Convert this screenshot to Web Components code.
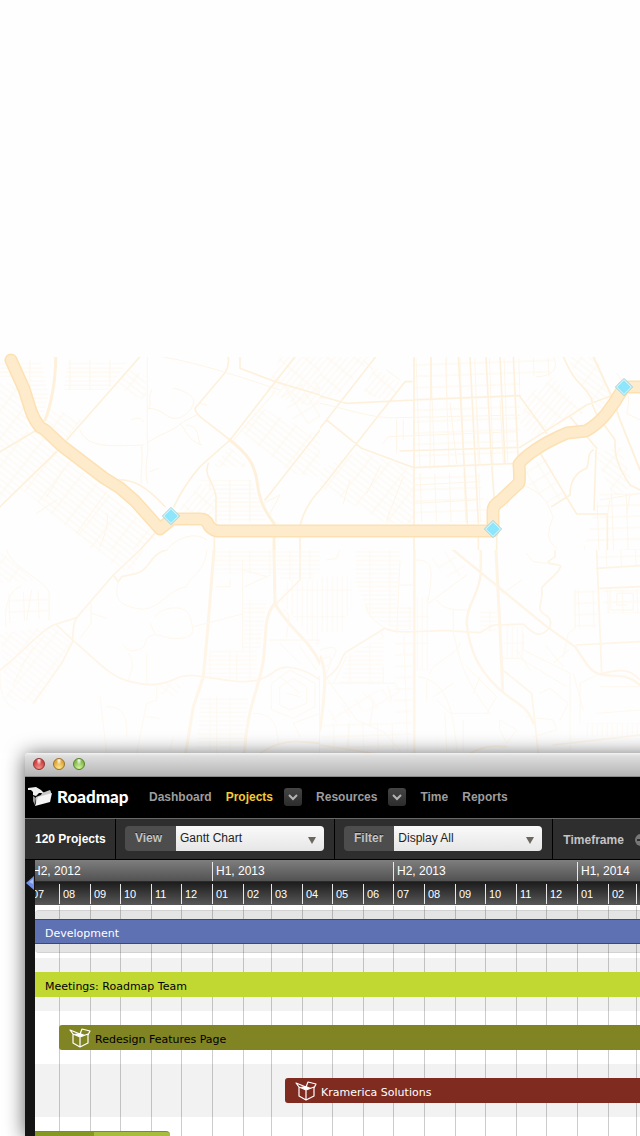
<!DOCTYPE html>
<html lang="en">
<head>
<meta charset="utf-8">
<meta name="viewport" content="width=device-width, initial-scale=1">
<title>Roadmap</title>
<style>
  body { margin: 0; background: #fff; font-family: "Liberation Sans", Arial, sans-serif; font-size: 12px; }
</style>
</head>
<body>
<landing-stage>
  <street-map slot="map"></street-map>
  <app-window>
    <app-nav slot="bar"></app-nav>
    <app-toolbar slot="bar"></app-toolbar>
    <gantt-chart></gantt-chart>
  </app-window>
</landing-stage>

<template id="t-stage">
  <style>
    :host { display: flex; flex-direction: column; height: 100vh; overflow: hidden; }
    .map { flex: 1 1 0; min-height: 0; }
    .win { flex: 0 0 383px; min-height: 0; display: flex; padding-left: 25px; margin-right: -40px; }
  </style>
  <div class="map"><slot name="map"></slot></div>
  <div class="win"><slot></slot></div>
</template>

<template id="t-map">
  <style>
    :host { display: block; height: 100%; background: #fefefe; }
    svg { display: block; width: 100%; height: 100%; }
    .st { fill: none; stroke: #fef1dc; stroke-linecap: round; stroke-linejoin: round; }
    .a { stroke-width: 9; } .b { stroke-width: 5; } .c { stroke-width: 3; stroke: #fef5e6; }
    .low { opacity: .75; }
  </style>
  <svg viewBox="0 0 640 753" preserveAspectRatio="xMinYMax slice" role="img" aria-label="Street map with a highlighted route">
    <defs>
      <pattern id="h" width="60" height="13" patternUnits="userSpaceOnUse"><path d="M0 6H60M30 0V13" fill="none" stroke="#fef5e7" stroke-width="2"/></pattern>
      <pattern id="v" width="15" height="80" patternUnits="userSpaceOnUse"><path d="M7 0V80M0 40H15" fill="none" stroke="#fef7ec" stroke-width="2.5"/></pattern>
      <pattern id="d" width="15" height="52" patternUnits="userSpaceOnUse" patternTransform="rotate(40)"><path d="M7 0V52M0 26H15" fill="none" stroke="#fef5e8" stroke-width="2"/></pattern>
      <pattern id="e" width="52" height="16" patternUnits="userSpaceOnUse" patternTransform="rotate(38)"><path d="M0 8H52M26 0V16" fill="none" stroke="#fef5e8" stroke-width="2"/></pattern>
      <pattern id="g" width="44" height="34" patternUnits="userSpaceOnUse" patternTransform="rotate(-2)"><path d="M0 17H44M22 0V34" fill="none" stroke="#fef5e7" stroke-width="2.5"/></pattern>
      <pattern id="k" width="42" height="36" patternUnits="userSpaceOnUse" patternTransform="rotate(-32)"><path d="M0 18H42M21 0V36" fill="none" stroke="#fef7ec" stroke-width="2.5"/></pattern>
      <clipPath id="top"><rect y="357" width="640" height="396"/></clipPath>
      <clipPath id="q"><rect width="960" height="630"/></clipPath>
      <linearGradient id="fade" x2="0" y2="1"><stop offset=".5" stop-color="#fff" stop-opacity="0"/><stop offset="1" stop-color="#fff" stop-opacity=".25"/></linearGradient>
    </defs>
    <g clip-path="url(#top)">
      <!-- north-west quarter -->
      <g transform="translate(0 340) scale(.33333)"><g class="st" clip-path="url(#q)">
        <g stroke="none">
          <path fill="url(#h)" d="M0 60H120L145 160 130 230 90 230 40 110 0 110ZM205 60H385L325 150H190ZM600 420H755L800 545H640L650 470Z"/>
          <path fill="url(#e)" d="M0 130H60L100 250 0 310ZM145 200L245 240 195 300 130 250ZM385 85L440 110 435 180 345 140ZM0 300L100 270 480 590 400 630H280L70 450 0 480Z"/>
          <path fill="url(#e)" d="M780 200L960 290V410L870 400 720 270ZM640 380L690 320 750 380Z"/>
          <path fill="url(#d)" d="M840 50H960V200L880 190 800 150ZM600 430L530 510 640 530 650 460Z"/>
          <path fill="url(#k)" d="M830 150L960 120V260L880 240Z"/>
        </g>
        <path class="a" d="M167 50C168 120 152 200 135 240M690 300C740 340 765 370 772 430S800 520 822 550L822 630"/>
        <path class="b" d="M720 50V85L835 128 960 165M885 50L690 300 600 380C570 415 545 450 522 500M420 50L200 300M170 335L0 500M684 50C690 75 680 90 675 98L585 205C585 215 590 220 600 230L690 300M345 420C400 415 440 440 495 500M960 270L795 480M0 335L110 270M643 590V630M900 590V630"/>
        <path class="b" d="M625 370C610 410 640 420 648 470V545M960 450C930 480 910 520 900 555M420 630L500 540"/>
        <path class="c" d="M485 50C600 70 720 110 840 150M442 50V300C450 340 430 370 442 430M240 270C260 320 310 320 430 315M440 310C480 280 510 280 550 245L590 225M445 205C490 205 500 240 530 235S580 200 580 190C590 170 550 150 520 145M540 250C560 270 560 300 605 315M560 255C600 260 590 290 600 310M455 150C440 180 460 190 445 205M425 320C430 380 420 400 424 430M395 240C410 230 425 235 430 245M450 395L475 385M500 630C540 580 600 580 620 600M170 480L110 520M320 455L230 580M320 520C330 540 310 600 300 620M190 390L140 470M790 490L840 465 810 520M825 155L700 300M600 190L620 195"/>
      </g></g>
      <!-- north-east quarter -->
      <g transform="translate(320 340) scale(.33333)"><g class="st" clip-path="url(#q)">
        <g stroke="none">
          <path fill="url(#d)" d="M0 50H160L60 160 0 180ZM160 80L240 130 220 190 130 160ZM620 170L700 110 790 220 640 290 600 250Z"/>
          <path fill="url(#g)" d="M282 55H700L690 110 600 105V370L282 385ZM282 400H480L500 545H282ZM840 460H960V630H790Z"/>
          <path fill="url(#e)" d="M740 50H830L880 200 860 250 800 170ZM0 390L120 330 282 390V550H200L0 440ZM820 340L900 320 940 440 880 470Z"/>
          <path fill="url(#k)" d="M600 390L680 350 740 470 690 495 620 430Z"/>
        </g>
        <path class="a" style="stroke-width:6px" d="M820 50L880 180 900 240 960 390"/>
        <path class="b" d="M0 168L80 190 280 180 600 167M167 50L0 265M275 125H255L0 450M282 50V630M20 240L125 325 282 383 600 370M240 333L600 322 800 195 880 165M415 50L442 550M450 50L475 550M498 50L513 340 522 470M540 50L555 370M580 50L595 370M333 50V180M730 50C770 140 780 120 815 175 815 220 860 260 885 300 885 330 880 360 930 435L960 450M655 330L770 522H862V630M695 500L750 465C750 430 760 400 800 385 810 360 800 340 820 330M828 330L822 510M530 590V630M475 590V630M750 230L830 325M600 170L680 280"/>
        <path class="c" d="M0 190C60 200 160 240 240 233L600 225M190 310L205 290 590 275M230 240V340M250 240V300M330 180V385M380 50V180M282 435L480 425M282 490L470 480M130 60L160 90M200 90L240 120M390 190L410 370M540 180L550 370M470 200L480 370M180 380L140 460M90 420L70 490M250 410L200 540M620 440C690 470 690 520 700 530 680 580 680 600 710 625M890 100C930 150 930 180 920 220L960 240M870 480L860 540M930 465L920 520M960 460L840 480M580 450L560 500M700 50C720 90 690 110 650 110"/>
      </g></g>
      <!-- south-west quarter -->
      <g transform="translate(0 550) scale(.33333)"><g class="st low" clip-path="url(#q)">
        <g stroke="none">
          <path fill="url(#e)" d="M290 0H430L400 60 350 60ZM0 0L100 90 0 100ZM0 250L160 230 215 280 120 460 20 450ZM470 400H555L520 445 480 430Z"/>
          <path fill="url(#g)" d="M25 130L140 120 150 200 20 220Z"/>
          <path fill="url(#h)" d="M640 0H960V70H640ZM728 150H800L780 300 728 300ZM630 300H770L770 390 610 380ZM600 440H745L730 600H590ZM840 0H940V90H840Z"/>
          <path fill="url(#v)" d="M865 90H960V300L840 150Z"/>
        </g>
        <path class="a" d="M642 0L622 250 610 380 580 470 557 610M822 0L825 160C790 200 800 250 790 330S740 470 733 610M825 160C860 230 930 270 960 340"/>
        <path class="b" d="M420 0L340 75 230 203 160 225C110 250 90 290 0 360M500 0C450 10 450 60 410 70L365 80 355 95 340 75M170 225L220 272C300 340 330 380 390 395S490 405 530 385 620 385 700 393 800 380 830 360 920 360 960 390M230 203C215 230 220 260 218 275L185 340 100 460M960 380V610M780 610C840 570 880 570 960 580M900 0V90L825 165"/>
        <path class="c" d="M620 0C620 60 560 90 560 110 500 120 490 170 430 178 360 170 340 150 355 95M465 200C480 170 560 160 570 200 580 240 590 260 540 265 500 270 480 250 460 255 430 260 440 290 425 295 390 310 380 300 370 285M450 220L465 250M580 230L728 192M728 30V300M730 60L800 80M735 110L810 75M440 310V400M385 310C410 340 390 370 385 390M273 160V220L240 265M275 190L320 205M20 0C40 60 140 90 147 130V210M95 120L80 210M60 110C30 120 10 170 18 230M0 370C0 430 10 460 50 480M100 290L40 400M130 260L60 350M470 410V450L440 460 410 610M300 440L320 610M320 470C380 470 380 510 380 560M650 110H690V90M710 310V390M650 440V610M440 500L480 505M520 560L510 600M815 400L870 360 945 400V470L880 505 815 480ZM840 410L880 385 920 410V460L870 480 840 465ZM860 430L900 440M840 380L900 430M900 290L950 360M810 270H960M840 280L900 340M850 180C880 190 860 230 860 260M760 490C830 490 830 540 835 580M880 520L960 490M900 560L880 520"/>
      </g></g>
      <!-- south-east quarter -->
      <g transform="translate(320 550) scale(.33333)"><g class="st low" clip-path="url(#q)">
        <g stroke="none">
          <path fill="url(#v)" d="M0 80H95V190L75 200V245H0ZM550 230H610V325H550ZM286 140H325V360H286ZM790 520H960V560H790Z"/>
          <path fill="url(#h)" d="M107 0H240L225 235 150 200 107 100ZM225 170H282V240H225ZM90 310L190 260V400H60ZM480 180H530V245H480Z"/>
          <path fill="url(#k)" d="M20 480L235 400 240 450 40 520ZM330 30L380 0 440 50 400 100Z"/>
          <path fill="url(#g)" d="M225 260H282V600H225ZM830 0H960V50H830ZM765 120H830V235H765ZM850 120H960V190H850ZM10 520H280V600H0Z"/>
        </g>
        <path class="a" d="M0 320C20 360 15 400 10 460L0 540M528 0L540 240 548 420"/>
        <path class="a" style="stroke-width:7px" d="M283 0V610M240 -130L400 0 680 230 765 290C800 340 810 370 850 375S920 370 960 405M482 0V70C480 130 440 160 440 220 450 310 480 360 530 410S620 460 640 520"/>
        <path class="b" d="M18 385C70 350 60 320 80 305L195 235C230 255 320 240 380 242L480 248C500 240 510 220 540 225L610 222C640 250 660 270 690 230 700 190 660 200 660 175 660 150 670 140 665 115 680 90 710 80 722 50 720 40 680 45 685 35L705 20V0M830 0L845 370M830 55L960 47M840 115L960 110M770 285L960 275M850 370C920 350 940 370 960 390M548 360L635 430 655 610M0 585L160 610M450 610C490 590 510 585 560 590M700 585L960 555"/>
        <path class="c" d="M138 165C140 200 170 215 195 235M325 160L440 75M350 150C370 180 400 180 450 180M282 30C340 30 340 50 325 150M330 370C330 340 420 310 420 280M400 180V250C420 320 420 370 510 490M295 380C370 390 400 460 410 600M320 390V450M350 450L390 490 510 490M545 325L600 325 740 410M610 250V300L750 370V600M500 80L550 130 605 90M620 10L640 35 680 40M765 120V235L745 250 730 320M780 520V400L830 375M430 510V600M375 490L380 600M500 490L530 440 440 350M20 385L110 510 190 545 240 600M190 350V400M80 320L40 400M20 400H225M180 240L190 260M0 300C60 280 60 300 20 350M0 330C40 310 40 320 20 370M130 430L150 450M205 410L215 450M90 520L80 600M160 450L150 530M870 120V180H940V130H890V165H920M660 430L690 415 745 460 720 510M540 510L590 540 560 580 540 540ZM620 500L700 510 710 540 640 560M460 430L480 380M340 440L400 400M760 370L790 480M840 410H960M830 490L960 480M680 290L730 350M700 340L745 300M240 30L230 250M282 105H240M20 30L50 25 60 0M590 300L630 360"/>
      </g></g>
      <rect y="357" width="640" height="396" fill="url(#fade)"/>
    </g>
    <g fill="none" stroke-linejoin="round" stroke-linecap="round">
      <path stroke="#fde1b2" stroke-width="13" d="M11 360L24 389 31 411Q34 420 40 427L45 430 62 446 104 478 120 488 135 501 160 529 172 519H200Q206 519 208 524T217 531H493V511Q493 505 500 501L519 483Q520 480 519 464 522 459 535 450T567 433L586 431Q598 424 606 414L614 403 624 387H650"/>
      <path stroke="#fdebcc" stroke-width="10" d="M11 360L24 389 31 411Q34 420 40 427L45 430 62 446 104 478 120 488 135 501 160 529 172 519H200Q206 519 208 524T217 531H493V511Q493 505 500 501L519 483Q520 480 519 464 522 459 535 450T567 433L586 431Q598 424 606 414L614 403 624 387H650"/>
    </g>
    <g fill="#fff" stroke="#86cbd6" stroke-width="1">
      <path d="M171 507.500L179.500 516 171 524.500 162.500 516ZM493 520.500L501.500 529 493 537.500 484.500 529ZM624 378.500L632.500 387 624 395.500 615.500 387Z"/>
      <path stroke="none" fill="#8ee6fd" d="M171 509L178 516 171 523 164 516ZM493 522L500 529 493 536 486 529ZM624 380L631 387 624 394 617 387Z"/>
    </g>
  </svg>
</template>

<template id="t-window">
  <style>
    :host { display: flex; flex-direction: column; flex: 1; min-width: 0; position: relative; background: #fff; border-radius: 4px 4px 0 0; box-shadow: 0 2px 20px rgba(0,0,0,.65); }
    .title { box-sizing: border-box; flex: none; height: 24px; padding: 0 8px 2px; display: flex; align-items: center; gap: 8px; border-radius: 4px 4px 0 0; background: linear-gradient(#f2f2f2, #dedede 3px, #b4b4b4); border-bottom: 1px solid #8a8a8a; }
    button { width: 12px; height: 12px; padding: 0; border: 1px solid var(--rim); border-radius: 50%; background: radial-gradient(ellipse at 50% 15%, #fff 0, transparent 38%), radial-gradient(circle at 50% 90%, var(--glow) 0, var(--tone) 65%); }
    .r { --rim: #8e3230; --tone: #cf4343; --glow: #f2908c; }
    .y { --rim: #97702a; --tone: #e0a63a; --glow: #fde88c; }
    .g { --rim: #55802c; --tone: #84ba4e; --glow: #d2f59c; }
    .body { flex: 1; min-height: 0; display: flex; }
  </style>
  <div class="title"><button class="r" aria-label="Close"></button><button class="y" aria-label="Minimise"></button><button class="g" aria-label="Zoom"></button></div>
  <slot name="bar"></slot>
  <div class="body"><slot></slot></div>
</template>

<template id="t-nav">
  <style>
    :host { display: block; background: #000; border-bottom: 1px solid #6a6a6a; }
    nav { box-sizing: border-box; display: flex; align-items: center; gap: 14px; height: 41px; padding: 0 0 2px 3px; font-weight: bold; line-height: 16px; }
    a { color: #9d9d9d; text-decoration: none; }
    .logo { display: flex; align-items: center; gap: 4px; width: 107px; color: #fff; font: 900 17px/24px Lato, sans-serif; }
    .on { color: #f3cb38; }
    .pair { display: flex; align-items: center; gap: 11px; }
    button { width: 18px; height: 18px; padding: 0; border: 0; border-radius: 3px; background: linear-gradient(#454545, #2c2c2c); display: grid; place-items: center; }
  </style>
  <nav>
    <a class="logo" href="#"><svg width="25" height="20" viewBox="0 0 25 20" aria-hidden="true"><path fill="#eee" d="M0 1L8 0 13 3 16 6 11 6 8 9 5 8 5 5 3 3 0 3Z"/><path fill="#999" d="M5 9L8 11 7 18 5 14Z"/><path fill="#c8c8c8" d="M8 10L13 8 14 6 22 3 23 5 23 8 8 16Z"/><path fill="#f4f4f4" d="M10 10L24 6 22 15 7 19Z"/></svg><span>Roadmap</span></a>
    <a href="#">Dashboard</a>
    <span class="pair"><a class="on" href="#">Projects</a><button aria-label="Projects menu"><svg width="10" height="8" viewBox="0 0 10 8"><path d="M1 2L5 6 9 2" fill="none" stroke="#b4b4b4" stroke-width="2"/></svg></button></span>
    <span class="pair"><a href="#">Resources</a><button aria-label="Resources menu"><svg width="10" height="8" viewBox="0 0 10 8"><path d="M1 2L5 6 9 2" fill="none" stroke="#b4b4b4" stroke-width="2"/></svg></button></span>
    <a href="#">Time</a>
    <a href="#">Reports</a>
  </nav>
</template>

<template id="t-toolbar">
  <style>
    :host { display: flex; height: 40px; background: #2e2e2e; border-bottom: 1px solid #000; font-weight: bold; line-height: 16px; color: #c4c4c4; white-space: nowrap; }
    .cell { display: flex; align-items: center; padding: 0 10px 0 9px; border-right: 1px solid #000; }
    .count { color: #fff; padding: 0 9px 0 10px; width: 71px; }
    .pick { padding-bottom: 2px; }
    .last { border: 0; gap: 11px; padding-top: 2px; padding-left: 10px; }
    button { width: 12px; height: 12px; padding: 0; border: 0; border-radius: 50%; background: #777; display: grid; place-items: center; }
  </style>
  <div class="cell count">120 Projects</div>
  <div class="cell pick"><labelled-select label="View" value="Gantt Chart"></labelled-select></div>
  <div class="cell pick"><labelled-select label="Filter" value="Display All"></labelled-select></div>
  <div class="cell last">Timeframe <button aria-label="Shorter timeframe"><svg width="8" height="2" viewBox="0 0 8 2"><path fill="#2e2e2e" d="M0 0H8V2H0Z"/></svg></button></div>
</template>

<template id="t-select">
  <style>
    :host { display: flex; height: 25px; border-radius: 4px; overflow: hidden; background: #4d4d4d; }
    label { box-sizing: border-box; min-width: 50px; padding: 0 11px 0 10px; line-height: 25px; color: #c4c4c4; text-shadow: 0 -1px 0 #222; }
    :host([label="View"]) label { min-width: 51px; }
    .field { display: grid; width: 148px; align-items: center; background: linear-gradient(#fafafa, #e6e6e6); }
    select, svg { grid-area: 1 / 1; }
    select { appearance: none; box-sizing: border-box; width: 100%; height: 25px; padding: 0 20px 0 4px; border: 0; background: none; color: #222; font: 12px/16px "Liberation Sans", Arial, sans-serif; }
    svg { justify-self: end; margin-right: 8px; margin-top: 4px; pointer-events: none; }
  </style>
  <label for="s"></label>
  <div class="field"><select id="s"><option></option></select><svg width="8" height="7" viewBox="0 0 8 7"><path fill="#6b675e" d="M0 0H8L4 7Z"/></svg></div>
</template>

<template id="t-gantt">
  <style>
    :host { display: grid; grid-template-columns: 10px 1fr; flex: 1; min-width: 0; overflow: hidden; color: #fff; }
    .gutter { background: #141414; padding: 16px 0 0 1px; }
    .gutter button { display: block; padding: 0; border: 0; background: none; width: 8px; height: 14px; }
    .main { min-width: 0; display: flex; flex-direction: column; overflow: hidden; }
    .scale { flex: none; display: flex; margin-left: -7px; }
    .scale span { flex: none; box-sizing: border-box; width: calc(var(--days) * 1px); border-left: 1px solid #e8e8e8; padding-left: 3px; white-space: nowrap; }
    .halves { padding-top: 2px; background: linear-gradient(#7e7e7e, #525252); border-bottom: 1px solid #2a2a2a; font-size: 12px; line-height: 19px; }
    .months { padding: 2px 0 1px; background: linear-gradient(#1c1c1c, #585858); font-size: 11px; line-height: 20px; }
    .plot { flex: 1; min-height: 0; display: grid; grid-template-columns: 100%; overflow: hidden; background: #fff; }
    .lines, .rows { grid-area: 1 / 1; min-width: 0; }
    .lines { display: flex; margin-left: -7px; z-index: 1; padding-top: 1px; }
    .lines span { flex: none; box-sizing: border-box; width: calc(var(--days) * 1px); border-left: 1px solid rgba(0,0,0,.2); }
  </style>
  <div class="gutter"><button aria-label="Scroll back"><svg width="8" height="14" viewBox="0 0 8 14"><path fill="#6f8fe8" d="M0 7L8 0V14Z"/><path fill="#a9bdf6" d="M3 6L7 3V8Z"/></svg></button></div>
  <div class="main">
    <div class="scale halves"></div>
    <div class="scale months"></div>
    <div class="plot">
      <div class="lines"></div>
      <div class="rows">
        <gantt-row kind="group" tone="blue">Development</gantt-row>
        <gantt-row kind="band" tone="lime">Meetings: Roadmap Team</gantt-row>
        <gantt-row tone="olive" start="24" box>Redesign Features Page</gantt-row>
        <gantt-row kind="band" tone="red" start="250" box>Kramerica Solutions</gantt-row>
        <gantt-row tone="green" length="135"></gantt-row>
      </div>
    </div>
  </div>
</template>

<template id="t-row">
  <style>
    :host { display: block; box-sizing: border-box; height: 53px; padding-top: 14px; font: 11px/25px "DejaVu Sans", Verdana, sans-serif; color: #000; }
    :host([kind="band"]) { background: #f2f2f2; }
    :host([kind="group"]) { padding-top: 5px; }
    :host([kind="group"]) .group { padding: 8px 0; background: #e4e4e4; border: 1px solid #d2d2d2; border-width: 1px 0; border-radius: 4px 0 0 4px; }
    .bar { position: relative; z-index: 2; box-sizing: border-box; height: 25px; margin-left: var(--start, 0px); width: var(--length, auto); padding-left: 10px; display: flex; align-items: center; gap: 4px; white-space: nowrap; border-radius: var(--round, 0px); background: var(--fill); color: var(--ink, #000); }
    .label { padding-top: 4px; }
    svg { flex: none; }
    :host([tone="blue"]) .bar { --fill: #5e71b3; --ink: #fff; border: 1px solid #34468f; border-width: 1px 0; }
    :host([tone="lime"]) .bar { --fill: #c0d831; }
    :host([tone="olive"]) .bar { --fill: #808423; --round: 3px 0 0 3px; }
    :host([tone="red"]) .bar { --fill: #802b20; --ink: #fff; --round: 3px 0 0 3px; }
    :host([tone="green"]) .bar { --fill: linear-gradient(90deg, #86981f 59px, #a9bd3c 59px); --round: 0 4px 0 0; border-top: 1px solid #7b8c22; }
  </style>
  <div class="group"><div class="bar"><svg width="22" height="20" viewBox="0 0 22 20" fill="none" stroke="#fff" stroke-width="1.2" stroke-linejoin="round" aria-hidden="true"><path d="M4 6V15L11 19 19 15V6M11 9V19M4 6L11 9 19 6M4 6L1 2 11 6M11 6L13 1 21 3 19 7"/><path fill="#fff" stroke="none" d="M5 6L11 5 16 7 11 9Z"/></svg><span class="label"><slot></slot></span></div></div>
</template>

<script>
  const stamp = (el, id) => {
    const root = el.attachShadow({ mode: "open" });
    root.append(document.getElementById(id).content.cloneNode(true));
    return root;
  };
  const plain = (name, id) => customElements.define(name, class extends HTMLElement {
    constructor() { super(); stamp(this, id); }
  });
  plain("street-map", "t-map");
  plain("app-nav", "t-nav");

  customElements.define("labelled-select", class extends HTMLElement {
    connectedCallback() {
      if (this.shadowRoot) return;
      const root = stamp(this, "t-select");
      root.querySelector("label").textContent = this.getAttribute("label");
      root.querySelector("option").textContent = this.getAttribute("value");
    }
  });
  plain("app-toolbar", "t-toolbar");

  customElements.define("gantt-row", class extends HTMLElement {
    connectedCallback() {
      if (this.shadowRoot) return;
      const root = stamp(this, "t-row");
      const bar = root.querySelector(".bar");
      for (const key of ["start", "length"]) {
        if (this.hasAttribute(key)) bar.style.setProperty("--" + key, this.getAttribute(key) + "px");
      }
      if (!this.hasAttribute("box")) root.querySelector("svg").remove();
    }
  });

  // The time scale runs at one pixel per day, from July 2012 on.
  customElements.define("gantt-chart", class extends HTMLElement {
    constructor() {
      super();
      const root = stamp(this, "t-gantt");
      const add = (parent, days, text) => {
        const s = document.createElement("span");
        s.style.setProperty("--days", days);
        s.textContent = text;
        root.querySelector(parent).append(s);
      };
      for (let h = 0; h < 4; h++) {
        const year = 2012 + Math.floor((h + 1) / 2), first = h % 2 ? 0 : 6;
        let total = 0;
        for (let m = first; m < first + 6; m++) {
          const days = new Date(year, m + 1, 0).getDate();
          total += days;
          add(".months", days, String(m + 1).padStart(2, "0"));
          add(".lines", days, "");
        }
        add(".halves", total, (first ? "H2, " : "H1, ") + year);
      }
    }
  });
  plain("app-window", "t-window");
  plain("landing-stage", "t-stage");
</script>
</body>
</html>
